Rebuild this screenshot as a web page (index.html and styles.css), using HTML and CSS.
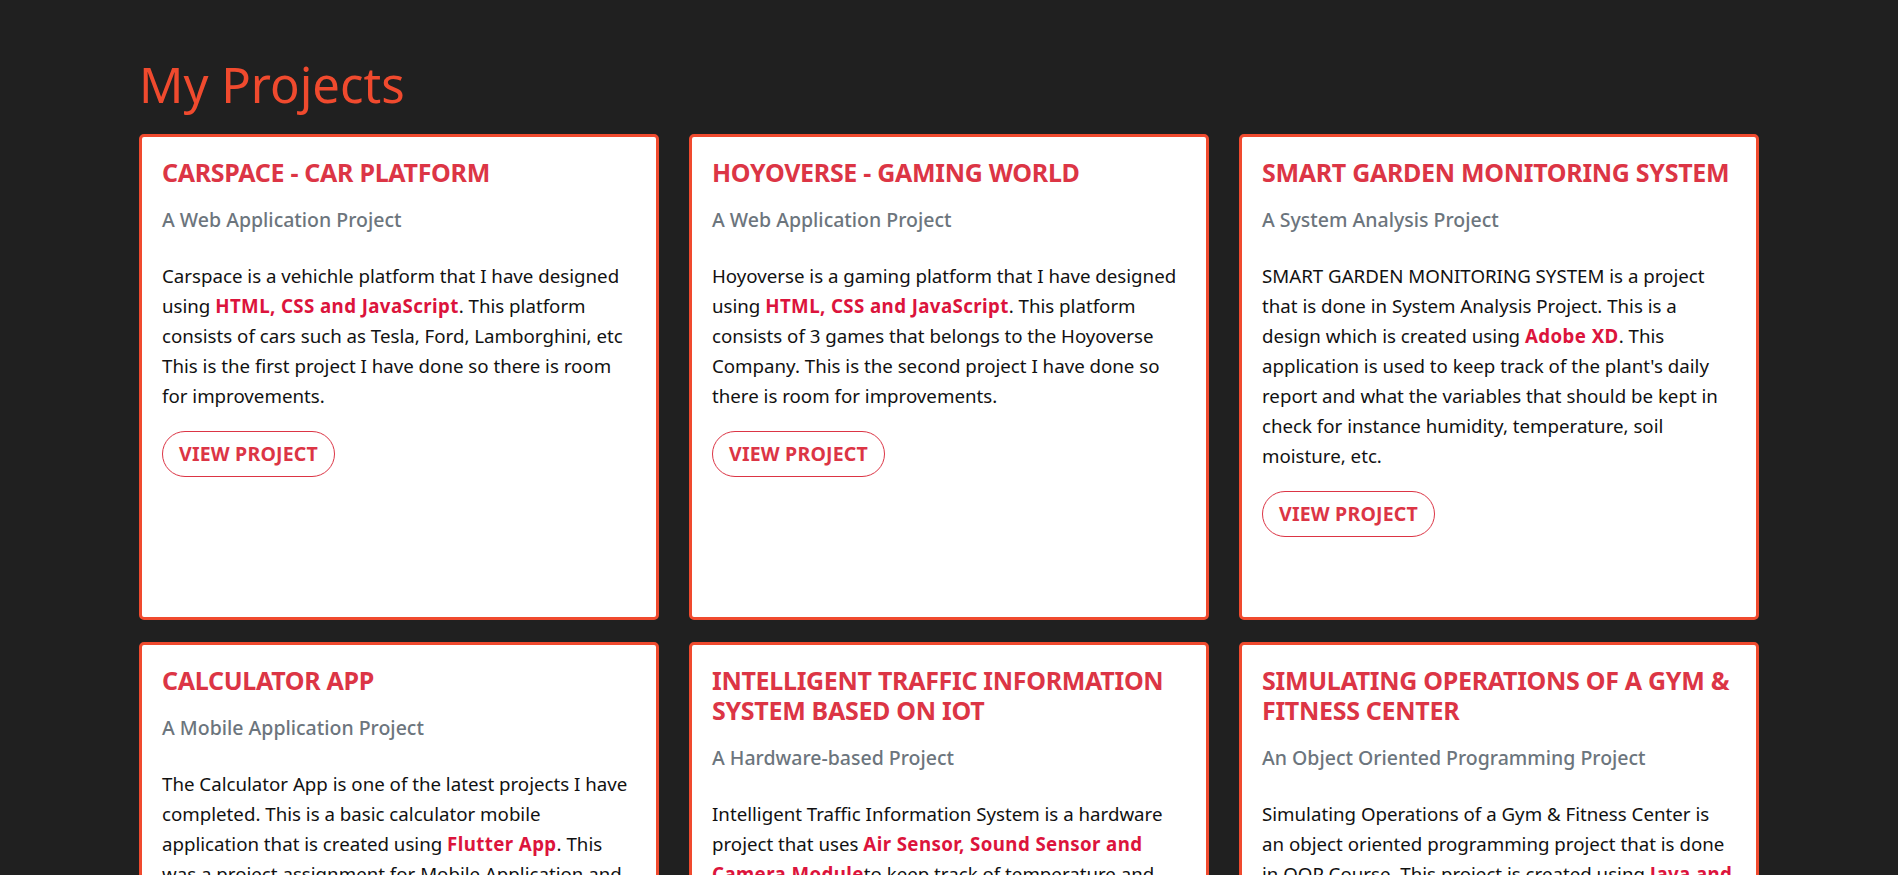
FILE: index.html
```html
<!DOCTYPE html>
<html lang="en">
<head>
<meta charset="utf-8">
<title>My Projects</title>
<link rel="stylesheet" href="styles.css">
</head>
<body>
<main class="projects">
  <h1 class="projects-heading">My Projects</h1>
  <div class="project-grid">
    <article class="project-card">
      <h2 class="project-title">CARSPACE - CAR PLATFORM</h2>
      <h3 class="project-type">A Web Application Project</h3>
      <p class="project-text">Carspace is a vehichle platform that I have designed using <strong class="hl">HTML, CSS and JavaScript</strong>. This platform consists of cars such as Tesla, Ford, Lamborghini, etc This is the first project I have done so there is room for improvements.</p>
      <a class="project-btn" href="#">VIEW PROJECT</a>
    </article>
    <article class="project-card">
      <h2 class="project-title">HOYOVERSE - GAMING WORLD</h2>
      <h3 class="project-type">A Web Application Project</h3>
      <p class="project-text">Hoyoverse is a gaming platform that I have designed using <strong class="hl">HTML, CSS and JavaScript</strong>. This platform consists of 3 games that belongs to the Hoyoverse Company. This is the second project I have done so there is room for improvements.</p>
      <a class="project-btn" href="#">VIEW PROJECT</a>
    </article>
    <article class="project-card">
      <h2 class="project-title">SMART GARDEN MONITORING SYSTEM</h2>
      <h3 class="project-type">A System Analysis Project</h3>
      <p class="project-text">SMART GARDEN MONITORING SYSTEM is a project that is done in System Analysis Project. This is a design which is created using <strong class="hl">Adobe XD</strong>. This application is used to keep track of the plant's daily report and what the variables that should be kept in check for instance humidity, temperature, soil moisture, etc.</p>
      <a class="project-btn" href="#">VIEW PROJECT</a>
    </article>
    <article class="project-card">
      <h2 class="project-title">CALCULATOR APP</h2>
      <h3 class="project-type">A Mobile Application Project</h3>
      <p class="project-text">The Calculator App is one of the latest projects I have completed. This is a basic calculator mobile application that is created using <strong class="hl">Flutter App</strong>. This was a project assignment for Mobile Application and Development course.</p>
      <a class="project-btn" href="#">VIEW PROJECT</a>
    </article>
    <article class="project-card">
      <h2 class="project-title">INTELLIGENT TRAFFIC INFORMATION SYSTEM BASED ON IOT</h2>
      <h3 class="project-type">A Hardware-based Project</h3>
      <p class="project-text">Intelligent Traffic Information System is a hardware project that uses <strong class="hl">Air Sensor, Sound Sensor and Camera Module</strong>to keep track of temperature and noise level of the traffic in real time.</p>
      <a class="project-btn" href="#">VIEW PROJECT</a>
    </article>
    <article class="project-card">
      <h2 class="project-title">SIMULATING OPERATIONS OF A GYM &amp; FITNESS CENTER</h2>
      <h3 class="project-type">An Object Oriented Programming Project</h3>
      <p class="project-text">Simulating Operations of a Gym &amp; Fitness Center is an object oriented programming project that is done in OOP Course. This project is created using <strong class="hl">Java and</strong> NetBeans as the development environment.</p>
      <a class="project-btn" href="#">VIEW PROJECT</a>
    </article>
  </div>
</main>
</body>
</html>
```
FILE: styles.css
```css
* {
  box-sizing: border-box;
}

html,
body {
  margin: 0;
  padding: 0;
  background: #202020;
}

body {
  font-family: "Noto Sans", "Open Sans", sans-serif;
  color: #111;
}

.projects {
  width: 1620px;
  margin: 0 auto;
  padding: 55px 0 40px;
}

.projects-heading {
  margin: 0 0 20px;
  font-size: 49px;
  font-weight: 400;
  line-height: 1.2;
  color: #f04a2e;
}

.project-grid {
  display: grid;
  grid-template-columns: repeat(3, 1fr);
  column-gap: 30px;
  row-gap: 22px;
}

.project-card {
  background: #fff;
  border: 3px solid #f04a2e;
  border-radius: 5px;
  padding: 20px 20px 24px;
  min-height: 486px;
}

.project-title {
  margin: 0 -4px 21px 0;
  font-size: 25px;
  font-weight: 700;
  line-height: 30px;
  color: #dc3545;
  letter-spacing: -0.3px;
}

.project-type {
  margin: 0 0 30px;
  font-size: 19.5px;
  font-weight: 500;
  line-height: 1.2;
  color: #6c757d;
}

.project-text {
  margin: 0 0 20px;
  font-size: 18.7px;
  line-height: 30px;
}

.hl {
  color: #dc143c;
  font-weight: 700;
  letter-spacing: 0.4px;
}

.project-btn {
  display: inline-block;
  height: 46px;
  padding: 0 16px;
  border: 1px solid #dc3545;
  border-radius: 23px;
  font-size: 19.5px;
  font-weight: 700;
  line-height: 44px;
  letter-spacing: 0.2px;
  color: #dc3545;
  text-decoration: none;
}
```
